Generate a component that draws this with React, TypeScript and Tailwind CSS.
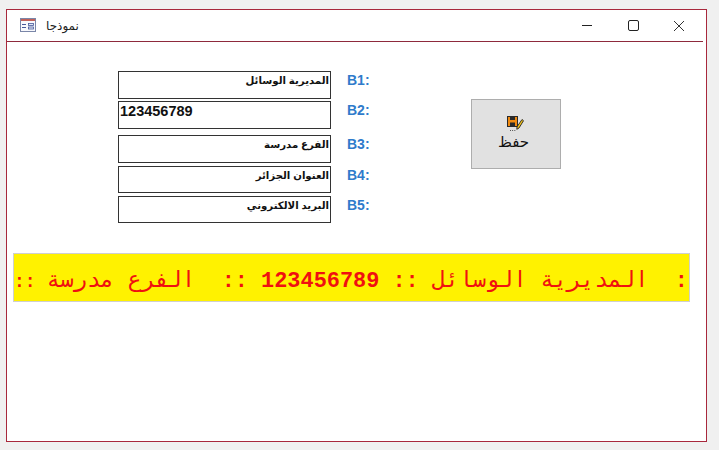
const FIELDS = [
  { label: "B1:", value: "المديرية الوسائل", rowClass: "h-[28px] mb-[2px]" },
  { label: "B2:", value: "123456789", rowClass: "h-[28px] mb-[6px]" },
  { label: "B3:", value: "الفرع مدرسة", rowClass: "h-[28px] mb-[3px]" },
  { label: "B4:", value: "العنوان الجزائر", rowClass: "h-[27px] mb-[3px]" },
  { label: "B5:", value: "البريد الالكتروني", rowClass: "h-[27px]" },
];

const ARABIC = "[font-family:'Liberation_Sans','DejaVu_Sans',sans-serif]";

function FormIcon() {
  return (
    <svg width="17" height="15" viewBox="0 0 17 15" className="shrink-0">
      <rect x="0.5" y="0.5" width="15" height="13" fill="#f7f8fc" stroke="#7a86a8" />
      <rect x="1" y="1" width="14" height="2" fill="#c0605a" />
      <path d="M2 6.5h4M2 9.5h4" stroke="#46589a" />
      <rect x="8.5" y="5.5" width="5" height="2" fill="#dfe6f5" stroke="#46589a" strokeWidth="0.8" />
      <rect x="8.5" y="9" width="5" height="2" fill="#dfe6f5" stroke="#46589a" strokeWidth="0.8" />
    </svg>
  );
}

function SaveIcon() {
  return (
    <svg width="17" height="16" viewBox="0 0 17 16">
      <rect x="0.5" y="0.5" width="10" height="10" fill="#f08a10" stroke="#2a2a2a" />
      <rect x="3" y="1" width="5" height="3" fill="#2a2a2a" />
      <rect x="3" y="6.5" width="5" height="4" fill="#2a2a2a" />
      <path d="M15 3.5l1.5 1.2L12 12l-2.2 1.3.2-2.4z" fill="#f5c518" stroke="#222" strokeWidth="0.9" />
      <path d="M3 14.5h.9M5.2 14.5h.9M7.4 14.5h.9" stroke="#444" />
    </svg>
  );
}

export default function App() {
  return (
    <div className="w-[719px] h-[450px] overflow-hidden bg-[#f0f0f0] pt-[9px] pl-[6px]">
      <div className="w-[701px] h-[433px] bg-white border border-[#a8283c] flex flex-col">
        {/* Title bar */}
        <div className="h-[32px] mr-[3px] shrink-0 border-b border-[#8e2a3c] flex items-center pl-[13px]">
          <FormIcon />
          <span dir="rtl" className={`ml-[9px] text-[12px] text-[#222] ${ARABIC}`}>نموذجا</span>
          <div className="ml-auto flex items-center text-[#222]">
            <div className="w-[10px] h-px bg-[#222] mr-[36px]" />
            <div className="w-[11px] h-[11px] rounded-[2px] border border-[#222] mr-[34px]" />
            <svg width="12" height="12" viewBox="0 0 12 12" className="mr-[18px]">
              <path d="M1 1l10 10M11 1L1 11" stroke="#333" strokeWidth="1" />
            </svg>
          </div>
        </div>

        {/* Form */}
        <div className="flex items-start pl-[111px] pt-[29px]">
          <div className="flex flex-col">
            {FIELDS.map((field) => (
              <div key={field.label} className={`flex ${field.rowClass}`}>
                <div
                  dir={field.label === "B2:" ? "ltr" : "rtl"}
                  className={`w-[213px] h-full border border-[#333] px-px font-bold text-[#111] ${ARABIC} ${
                    field.label === "B2:" ? "text-[14.5px] leading-[18px]" : "text-[10.2px] leading-[15px] pt-px"
                  }`}
                >
                  {field.value}
                </div>
                <span className="ml-[16px] pt-px text-[14px] leading-[17px] font-bold text-[#2f7bcb] [font-family:'Liberation_Sans',sans-serif]">
                  {field.label}
                </span>
              </div>
            ))}
          </div>
          <button className="ml-[101px] mt-[28px] w-[90px] h-[70px] bg-[#e1e1e1] border border-[#adadad] flex flex-col items-center pt-[16px]">
            <SaveIcon />
            <span dir="rtl" className={`mt-[1px] mr-[4px] text-[15px] leading-[17px] text-[#111] ${ARABIC}`}>حفظ</span>
          </button>
        </div>

        {/* Banner */}
        <div
          dir="rtl"
          className="ml-[6px] mt-[30px] w-[677px] h-[49px] bg-[#fff200] border border-[#cfcfcf] overflow-hidden whitespace-pre flex items-center pr-[1px] pt-[8px] text-[21.9px] font-bold text-[#f01010] [font-family:'Liberation_Mono','DejaVu_Sans_Mono',monospace]"
        >
          <span>
            {":  "}
            <span className="font-normal text-[22.5px]">المديرية الوسائل</span>
            {" :: 123456789 ::  "}
            <span className="font-normal text-[22.5px]">الفرع مدرسة</span>
            <span className="text-[18px]">{" ::"}</span>
          </span>
        </div>
      </div>
    </div>
  );
}
